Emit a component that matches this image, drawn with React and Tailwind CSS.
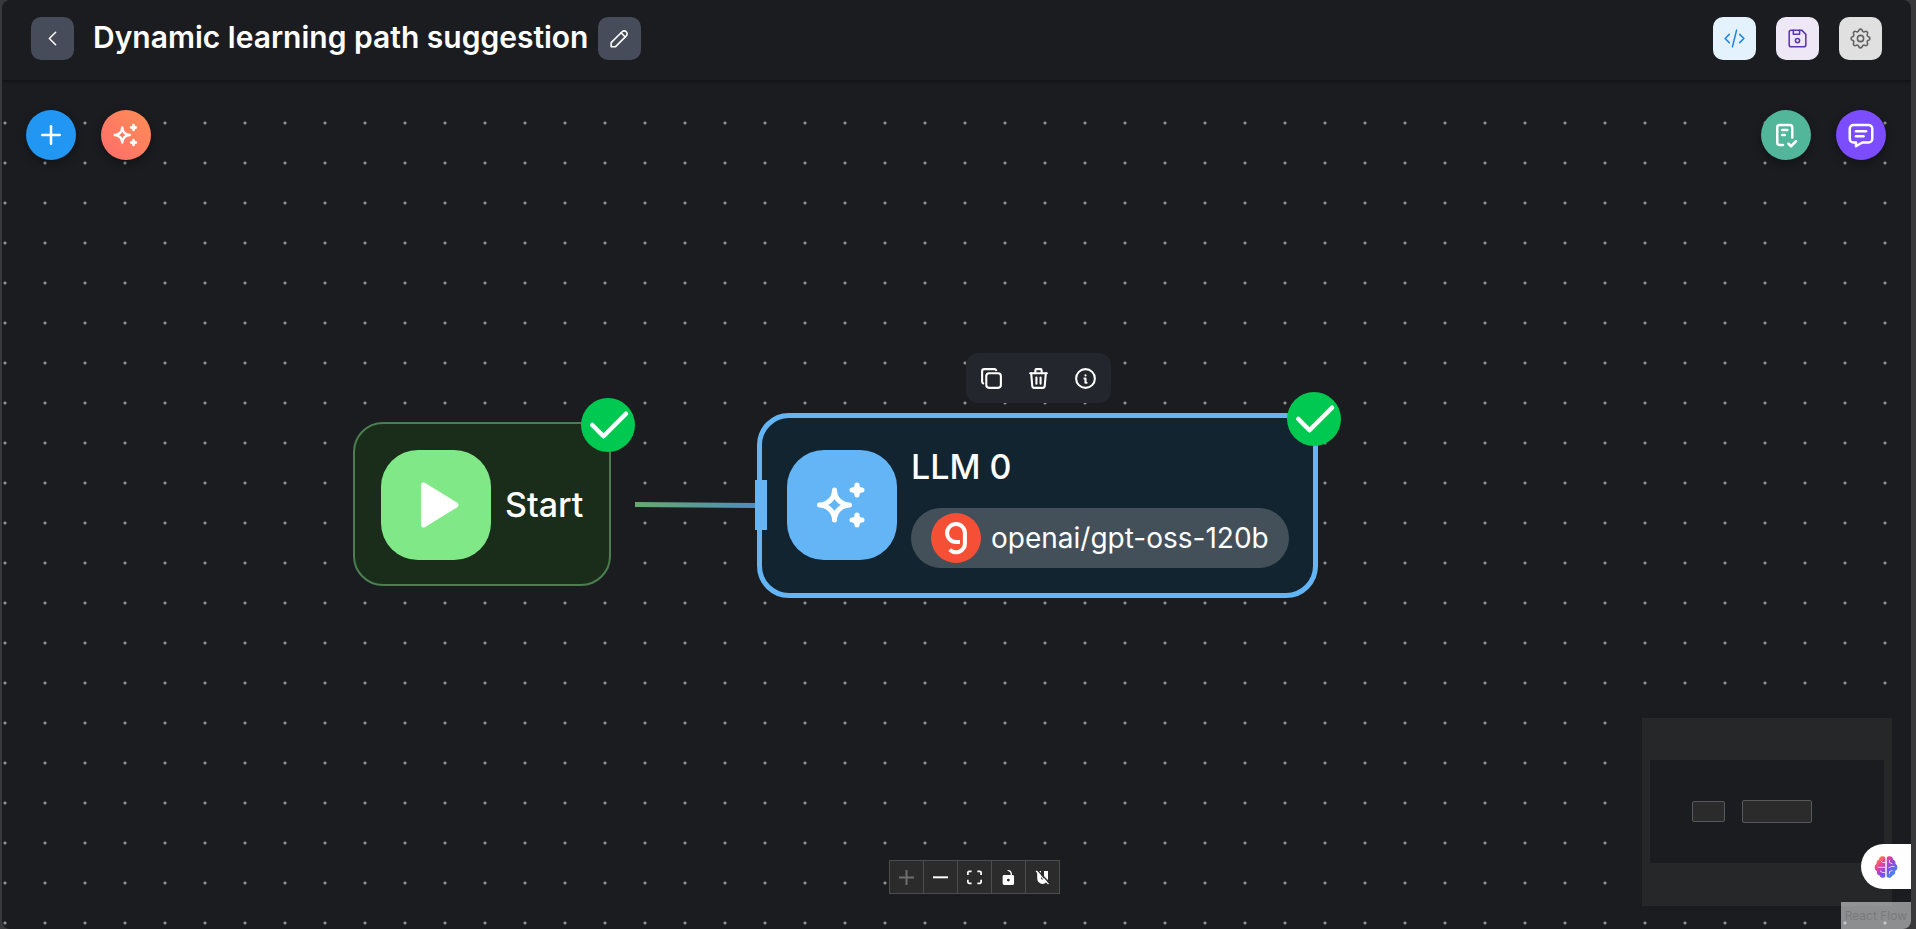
import {
  TbCheck,
  TbChecklist,
  TbChevronLeft,
  TbCode,
  TbCopy,
  TbDeviceFloppy,
  TbInfoCircle,
  TbMessage,
  TbPencil,
  TbPlayerPlayFilled,
  TbPlus,
  TbSettings,
  TbSparkles,
  TbTrash,
} from "react-icons/tb";

function HeaderButton({ label, className, children }) {
  return (
    <button
      type="button"
      aria-label={label}
      className={`flex size-[43px] shrink-0 items-center justify-center rounded-[10px] ${className}`}
    >
      {children}
    </button>
  );
}

function Fab({ label, className, children }) {
  return (
    <button
      type="button"
      aria-label={label}
      className={`flex size-[50px] items-center justify-center rounded-full text-white shadow-[0_3px_8px_rgba(0,0,0,0.35)] ${className}`}
    >
      {children}
    </button>
  );
}

function StatusBadge({ className }) {
  return (
    <span
      role="img"
      aria-label="Completed"
      className={`absolute flex size-[54px] items-center justify-center rounded-full bg-[#00c951] text-white ${className}`}
    >
      <TbCheck size={54} strokeWidth={2} />
    </span>
  );
}

function GroqLogo() {
  return (
    <svg viewBox="0 0 50 50" className="size-[50px] shrink-0" aria-hidden="true">
      <circle cx="25" cy="25" r="25" fill="#f55036" />
      <path
        d="M29 28.900h-4a8.900 8.900 0 1 1 8.900-8.900V30.300a8.900 8.900 0 0 1-15.200 6.300"
        fill="none"
        stroke="#fff"
        strokeWidth="4"
      />
    </svg>
  );
}

function BrainLogo() {
  return (
    <svg viewBox="0 0 24 24" className="size-[24px]" aria-hidden="true">
      <defs>
        <linearGradient id="brain" x1="0" y1="0" x2="1" y2="1">
          <stop offset="0.1" stopColor="#ff8a3c" />
          <stop offset="0.32" stopColor="#e8409a" />
          <stop offset="0.6" stopColor="#7b4df0" />
          <stop offset="0.95" stopColor="#2aa5f5" />
        </linearGradient>
      </defs>
      <path
        fill="url(#brain)"
        d="M11.3 2.6v18.8c-.6 1.2-2 1.700-3.300 1.300-1.200-.2-2-1.100-2.200-2.200-1.600-.1-2.900-1.300-3-2.900-.1-.5 0-.9.2-1.300C1.500 15.600.6 14.100.6 12.300c0-1.500.8-2.900 2-3.600-.5-2 .5-3.700 2.300-4.300.2-1.800 1.500-3.100 3.200-3.100 1.500 0 2.700.5 3.200 1.300zM12.700 2.600v18.800c.6 1.200 2 1.700 3.300 1.300 1.200-.2 2-1.100 2.200-2.200 1.600-.1 2.900-1.300 3-2.900.1-.5 0-.9-.2-1.300 1.500-.7 2.400-2.200 2.400-4 0-1.500-.8-2.900-2-3.600.5-2-.5-3.700-2.300-4.300-.2-1.800-1.500-3.100-3.200-3.100-1.500 0-2.700.5-3.200 1.300z"
      />
      <path
        d="M11.300 7.500H8.500L6.800 5.800M3.500 12.300H11.300M11.300 17.500H8.500L6 15.800M15.500 5v2.500l3 1.500M14.500 12.800l3-1.300h3M15.500 19v-2.500l3-1"
        fill="none"
        stroke="#fff"
        strokeWidth="0.9"
        opacity="0.85"
      />
    </svg>
  );
}

const controls = [
  {
    label: "Zoom in",
    dim: true,
    box: "0 0 32 32",
    path: "M32 18.133H18.133V32h-4.266V18.133H0v-4.266h13.867V0h4.266v13.867H32z",
  },
  { label: "Zoom out", box: "0 0 32 5", path: "M0 0h32v4.200H0z" },
  {
    label: "Fit view",
    box: "0 0 32 30",
    path: "M3.692 4.63c0-.53.4-.938.939-.938h5.215V0H4.708C2.13 0 0 2.054 0 4.63v5.216h3.692V4.631zM27.354 0h-5.2v3.692h5.17c.53 0 .984.4.984.939v5.215H32V4.631A4.624 4.624 0 0027.354 0zm.954 24.83c0 .532-.4.94-.939.94h-5.215v3.768h5.215c2.577 0 4.631-2.13 4.631-4.707v-5.139h-3.692v5.139zm-23.677.94c-.531 0-.939-.4-.939-.94v-5.138H0v5.139c0 2.577 2.13 4.707 4.708 4.707h5.138V25.77H4.631z",
  },
  {
    label: "Toggle interactivity",
    box: "0 0 25 32",
    path: "M21.333 10.667H19.81V7.619C19.81 3.429 16.38 0 12.19 0c-4.114 1.828-1.37 2.133.305 2.438 1.676.305 4.42 2.59 4.42 5.181v3.048H3.047A3.056 3.056 0 000 13.714v15.238A3.056 3.056 0 003.048 32h18.285a3.056 3.056 0 003.048-3.048V13.714a3.056 3.056 0 00-3.047-3.047zM12.19 24.533a3.056 3.056 0 01-3.047-3.047 3.056 3.056 0 013.047-3.048 3.056 3.056 0 013.048 3.048 3.056 3.056 0 01-3.048 3.047z",
  },
];

function Controls() {
  return (
    <div className="flex border border-r-0 border-[#4d4d4e] bg-[#2b2b2b]">
      {controls.map((c) => (
        <button
          key={c.label}
          type="button"
          aria-label={c.label}
          className={`flex h-8 w-[34px] items-center justify-center border-r border-[#4d4d4e] ${c.dim ? "text-[#6f6f6f]" : "text-white"}`}
        >
          <svg viewBox={c.box} className="size-[15px]" fill="currentColor" aria-hidden="true">
            <path d={c.path} />
          </svg>
        </button>
      ))}
      <button
        type="button"
        aria-label="Toggle snapping"
        className="flex h-8 w-[34px] items-center justify-center border-r border-[#4d4d4e] text-white"
      >
        <svg viewBox="0 0 15 15" className="size-[15px]" aria-hidden="true">
          <path
            fill="currentColor"
            d="M2.200 1H6v7a1.500 1.500 0 0 0 3 0V1h4v7.500a5.400 5.400 0 0 1-10.800 0z"
          />
          <path d="M2.500 .2l12 12.800" stroke="#2b2b2b" strokeWidth="1.400" />
          <path d="M1 .8l12.500 13.400" stroke="currentColor" strokeWidth="1.200" />
        </svg>
      </button>
    </div>
  );
}

export default function App() {
  return (
    <div className="min-h-screen overflow-hidden bg-[#39393b] pr-[5px] pl-[2px] font-['Inter',sans-serif] text-white">
      <div className="flex min-h-screen flex-col overflow-hidden rounded-lg bg-[#1b1c20]">
        <header className="z-10 flex h-[81px] items-start justify-between border-b border-[#131417] pt-[17px] pr-[29px] pl-[29px] shadow-[0_1px_3px_rgba(0,0,0,0.3)]">
          <div className="flex items-start">
            <HeaderButton label="Back" className="bg-[#464c59]">
              <TbChevronLeft size={25} strokeWidth={1.5} />
            </HeaderButton>
            <h1 className="ml-[19px] text-[30px] leading-10 font-semibold">
              Dynamic learning path suggestion
            </h1>
            <HeaderButton label="Rename" className="ml-[10px] bg-[#464c59]">
              <TbPencil size={25} strokeWidth={1.5} />
            </HeaderButton>
          </div>
          <div className="flex items-center gap-5">
            <HeaderButton label="View code" className="bg-[#e3f2fd] text-[#1e88e5]">
              <TbCode size={25} strokeWidth={1.5} />
            </HeaderButton>
            <HeaderButton label="Save" className="bg-[#ede7f6] text-[#5e35b1]">
              <TbDeviceFloppy size={25} strokeWidth={1.5} />
            </HeaderButton>
            <HeaderButton label="Settings" className="bg-[#e0e0e0] text-[#616161]">
              <TbSettings size={25} strokeWidth={1.5} />
            </HeaderButton>
          </div>
        </header>

        <main className="relative flex-1">
          <div className="absolute inset-x-0 top-3 bottom-0 bg-[radial-gradient(circle,#919193_1px,transparent_2px)] bg-[length:40px_40px] bg-[position:-17px_10px]" />

          <div className="absolute top-[29px] left-6 flex gap-[25px]">
            <Fab label="Add node" className="bg-[#2196f3]">
              <TbPlus size={30} />
            </Fab>
            <Fab label="Generate flow" className="bg-linear-45 from-[#ff6b6b] to-[#ff8e53]">
              <TbSparkles size={30} />
            </Fab>
          </div>
          <div className="absolute top-[29px] right-[25px] flex gap-[25px]">
            <Fab label="Validate" className="bg-[#52b69a]">
              <TbChecklist size={30} />
            </Fab>
            <Fab label="Chat" className="bg-[#7c4dff]">
              <TbMessage size={30} />
            </Fab>
          </div>

          <svg
            viewBox="0 0 120 8"
            className="absolute top-[420px] left-[633px] h-2 w-[120px]"
            aria-hidden="true"
          >
            <defs>
              <linearGradient id="edge" gradientUnits="userSpaceOnUse" x1="0" y1="0" x2="120" y2="0">
                <stop offset="0" stopColor="#66aa6b" />
                <stop offset="1" stopColor="#4d8dc0" />
              </linearGradient>
            </defs>
            <path d="M0 3.500L120 4.500" stroke="url(#edge)" strokeWidth="5" />
          </svg>

          <section
            aria-label="Start node"
            className="absolute top-[341px] left-[351px] flex h-[164px] items-center gap-[14px] rounded-[30px] border-2 border-[#4b7f4f] bg-[#1a2d1b] pt-[2px] pr-[26px] pl-[26px]"
          >
            <span className="flex size-[110px] items-center justify-center rounded-[37px] bg-[#81e888]">
              <TbPlayerPlayFilled size={60} />
            </span>
            <span className="text-[34px] leading-[50px] font-medium">Start</span>
            <StatusBadge className="-top-[26px] -right-[26px]" />
          </section>

          <section
            aria-label="LLM 0 node"
            className="absolute top-[332px] left-[755px] flex h-[185px] items-center gap-[14px] rounded-[32px] border-[5px] border-[#64b5f6] bg-[#12242f] pr-6 pb-[2px] pl-[25px]"
          >
            <span className="absolute top-[62px] -left-[7px] h-[50px] w-3 bg-[#64b5f6]" />
            <span className="flex size-[110px] items-center justify-center rounded-[37px] bg-[#64b5f6]">
              <TbSparkles size={60} />
            </span>
            <div className="flex flex-col gap-4">
              <span className="text-[34px] leading-[50px] font-medium">LLM 0</span>
              <span className="flex h-[60px] items-center gap-[10px] rounded-full bg-[#435059] pr-5 pl-5 text-[28px]">
                <GroqLogo />
                openai/gpt-oss-120b
              </span>
            </div>
            <StatusBadge className="-top-[26px] -right-[28px]" />
          </section>

          <div className="absolute top-[272px] left-[964px] flex h-[50px] items-center gap-[22px] rounded-xl bg-[#23262d] px-[13px]">
            <button type="button" aria-label="Duplicate">
              <TbCopy size={25} />
            </button>
            <button type="button" aria-label="Delete">
              <TbTrash size={25} />
            </button>
            <button type="button" aria-label="Info">
              <TbInfoCircle size={25} />
            </button>
          </div>

          <div className="absolute inset-x-0 bottom-[35px] flex justify-center pl-9">
            <Controls />
          </div>

          <svg
            viewBox="0 0 250 188"
            className="absolute right-[19px] bottom-[23px] h-[188px] w-[250px]"
            aria-label="Mini map"
          >
            <rect width="250" height="188" fill="#252729" />
            <rect x="8" y="42" width="234" height="103" fill="#1b1c20" />
            <rect x="50.500" y="83.500" width="32" height="20" rx="1.500" fill="#2b2b2b" stroke="#58595a" />
            <rect x="100.500" y="82.500" width="69" height="22" rx="1.500" fill="#2b2b2b" stroke="#58595a" />
          </svg>

          <a
            href="https://reactflow.dev"
            className="absolute right-0 bottom-0 bg-white/50 px-1 pt-1 pb-[3px] text-xs leading-5 text-[#7a7a7c]"
          >
            React Flow
          </a>

          <button
            type="button"
            aria-label="Open assistant"
            className="absolute right-0 bottom-10 flex h-[45px] w-[50px] items-center justify-center rounded-l-full bg-white"
          >
            <BrainLogo />
          </button>
        </main>
      </div>
    </div>
  );
}
